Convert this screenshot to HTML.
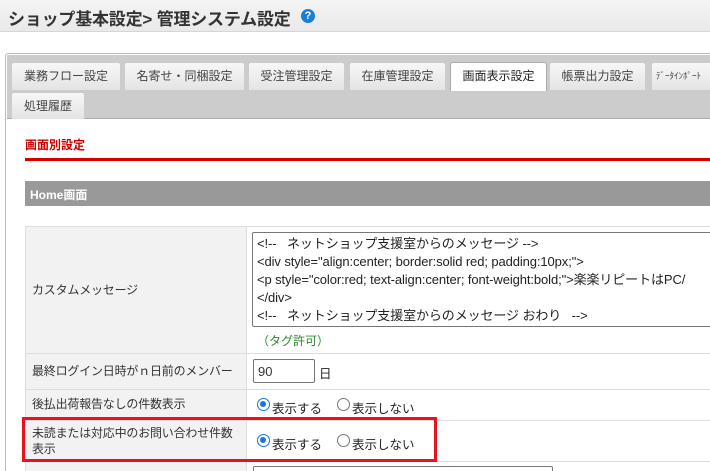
<!DOCTYPE html>
<html><head><meta charset="utf-8"><style>
*{box-sizing:border-box;margin:0;padding:0}
html,body{width:710px;height:471px;overflow:hidden}
body{background:#fff;font-family:"Liberation Sans","Noto Sans CJK JP",sans-serif;color:#333;position:relative}
.abs{position:absolute}
.hdr{left:0;top:0;width:710px;height:32px;background:linear-gradient(#f4f4f4,#e9e9e9);border-bottom:1px solid #d6d6d6}
.title{left:8px;top:5px;font-size:17px;font-weight:bold;color:#333;letter-spacing:-0.2px;white-space:nowrap}
.help{left:301px;top:9px;width:14px;height:14px;border-radius:50%;background:#1a7fd4;color:#fff;font-size:11px;font-weight:bold;text-align:center;line-height:14px}
.panel{left:5px;top:53px;width:720px;height:430px;border:1px solid #bbb;border-radius:3px}
.tabbg{left:7px;top:55px;width:710px;height:64px;background:#ccc;border-bottom:1px solid #aaa}
.tab{position:absolute;height:28px;background:linear-gradient(#f7f7f7,#e4e4e4);border:1px solid #ccc;border-bottom:none;border-radius:3px 3px 0 0;font-size:12px;color:#444;text-align:center;line-height:27px;white-space:nowrap;overflow:hidden}
.tab.act{background:#fff;border-color:#aaa;color:#222}
.sec{left:25px;top:136px;font-size:12px;color:#c00;font-weight:bold}
.redline{left:25px;top:158px;width:700px;height:3px;background:#d40000}
.bar{left:25px;top:181px;width:700px;height:25px;background:#999;color:#fff;font-weight:bold;font-size:12px;padding:5px 0 0 5px}
.row{position:absolute;left:25px;width:700px;border-top:1px solid #ddd}
.lbl{position:absolute;left:0;top:0;bottom:0;width:222px;background:#f2f2f2;border-right:1px solid #ddd;border-left:1px solid #ddd;font-size:12px;color:#333;padding-left:6px;letter-spacing:-0.2px;white-space:nowrap}
.ta{left:252px;top:232px;width:470px;height:95px;border:1px solid #777;border-radius:2px;font-size:13px;line-height:18px;padding:2px 0 0 4px;white-space:nowrap;color:#222;letter-spacing:-0.1px;overflow:hidden}
.radio{position:absolute;width:13px;height:13px;border-radius:50%;border:1px solid #777;background:#fff}
.radio.on{border:1.5px solid #1a73e8}
.radio.on::after{content:"";position:absolute;left:2px;top:2px;width:6px;height:6px;border-radius:50%;background:#1a73e8}
.rt{position:absolute;font-size:12.5px;color:#222}
</style></head><body>
<div class="abs hdr"></div>
<div class="abs title">ショップ基本設定&gt; 管理システム設定</div>
<div class="abs help">?</div>
<div class="abs panel"></div>
<div class="abs tabbg"></div>
<div class="tab" style="left:11px;top:62px;width:110px">業務フロー設定</div>
<div class="tab" style="left:124px;top:62px;width:121px">名寄せ・同梱設定</div>
<div class="tab" style="left:248px;top:62px;width:97px">受注管理設定</div>
<div class="tab" style="left:349px;top:62px;width:97px">在庫管理設定</div>
<div class="tab act" style="left:450px;top:62px;width:97px;height:29px">画面表示設定</div>
<div class="tab" style="left:549px;top:62px;width:97px">帳票出力設定</div>
<div class="tab" style="left:651px;top:62px;width:70px;font-size:9px;text-align:left;padding-left:4px">ﾃﾞｰﾀｲﾝﾎﾟｰﾄ</div>
<div class="tab" style="left:11px;top:92px;width:74px;height:27px">処理履歴</div>
<div class="abs sec">画面別設定</div>
<div class="abs redline"></div>
<div class="abs bar">Home画面</div>

<div class="row" style="top:226px;height:128px"><div class="lbl" style="line-height:126px">カスタムメッセージ</div></div>
<div class="abs ta">&lt;!--&nbsp;&nbsp; ネットショップ支援室からのメッセージ --&gt;<br>&lt;div style="align:center; border:solid red; padding:10px;"&gt;<br>&lt;p style="color:red; text-align:center; font-weight:bold;"&gt;楽楽リピートはPC/<br>&lt;/div&gt;<br>&lt;!--&nbsp;&nbsp; ネットショップ支援室からのメッセージ おわり&nbsp;&nbsp; --&gt;</div>
<div class="abs" style="left:257px;top:332px;font-size:12px;color:#2a8a2a">（タグ許可）</div>

<div class="row" style="top:353px;height:36px"><div class="lbl" style="line-height:34px">最終ログイン日時がｎ日前のメンバー</div></div>
<div class="abs" style="left:253px;top:359px;width:62px;height:24px;border:1px solid #777;border-radius:2px;font-size:13px;padding:4px 0 0 4px">90</div>
<div class="rt" style="left:319px;top:363px">日</div>

<div class="row" style="top:389px;height:31px"><div class="lbl" style="line-height:29px">後払出荷報告なしの件数表示</div></div>
<div class="radio on" style="left:257px;top:398px"></div><div class="rt" style="left:272px;top:398px">表示する</div>
<div class="radio" style="left:337px;top:398px"></div><div class="rt" style="left:352px;top:398px">表示しない</div>

<div class="row" style="top:420px;height:41px"><div class="lbl" style="padding-top:4px;line-height:16px">未読または対応中のお問い合わせ件数<br>表示</div></div>
<div class="radio on" style="left:257px;top:434px"></div><div class="rt" style="left:272px;top:434px">表示する</div>
<div class="radio" style="left:337px;top:434px"></div><div class="rt" style="left:352px;top:434px">表示しない</div>

<div class="row" style="top:461px;height:20px"><div class="lbl"></div></div>
<div class="abs" style="left:253px;top:466px;width:300px;height:20px;border:1px solid #777;border-radius:2px"></div>

<div class="abs" style="left:22px;top:417px;width:415px;height:45px;border:3px solid #e8121d"></div>
</body></html>
